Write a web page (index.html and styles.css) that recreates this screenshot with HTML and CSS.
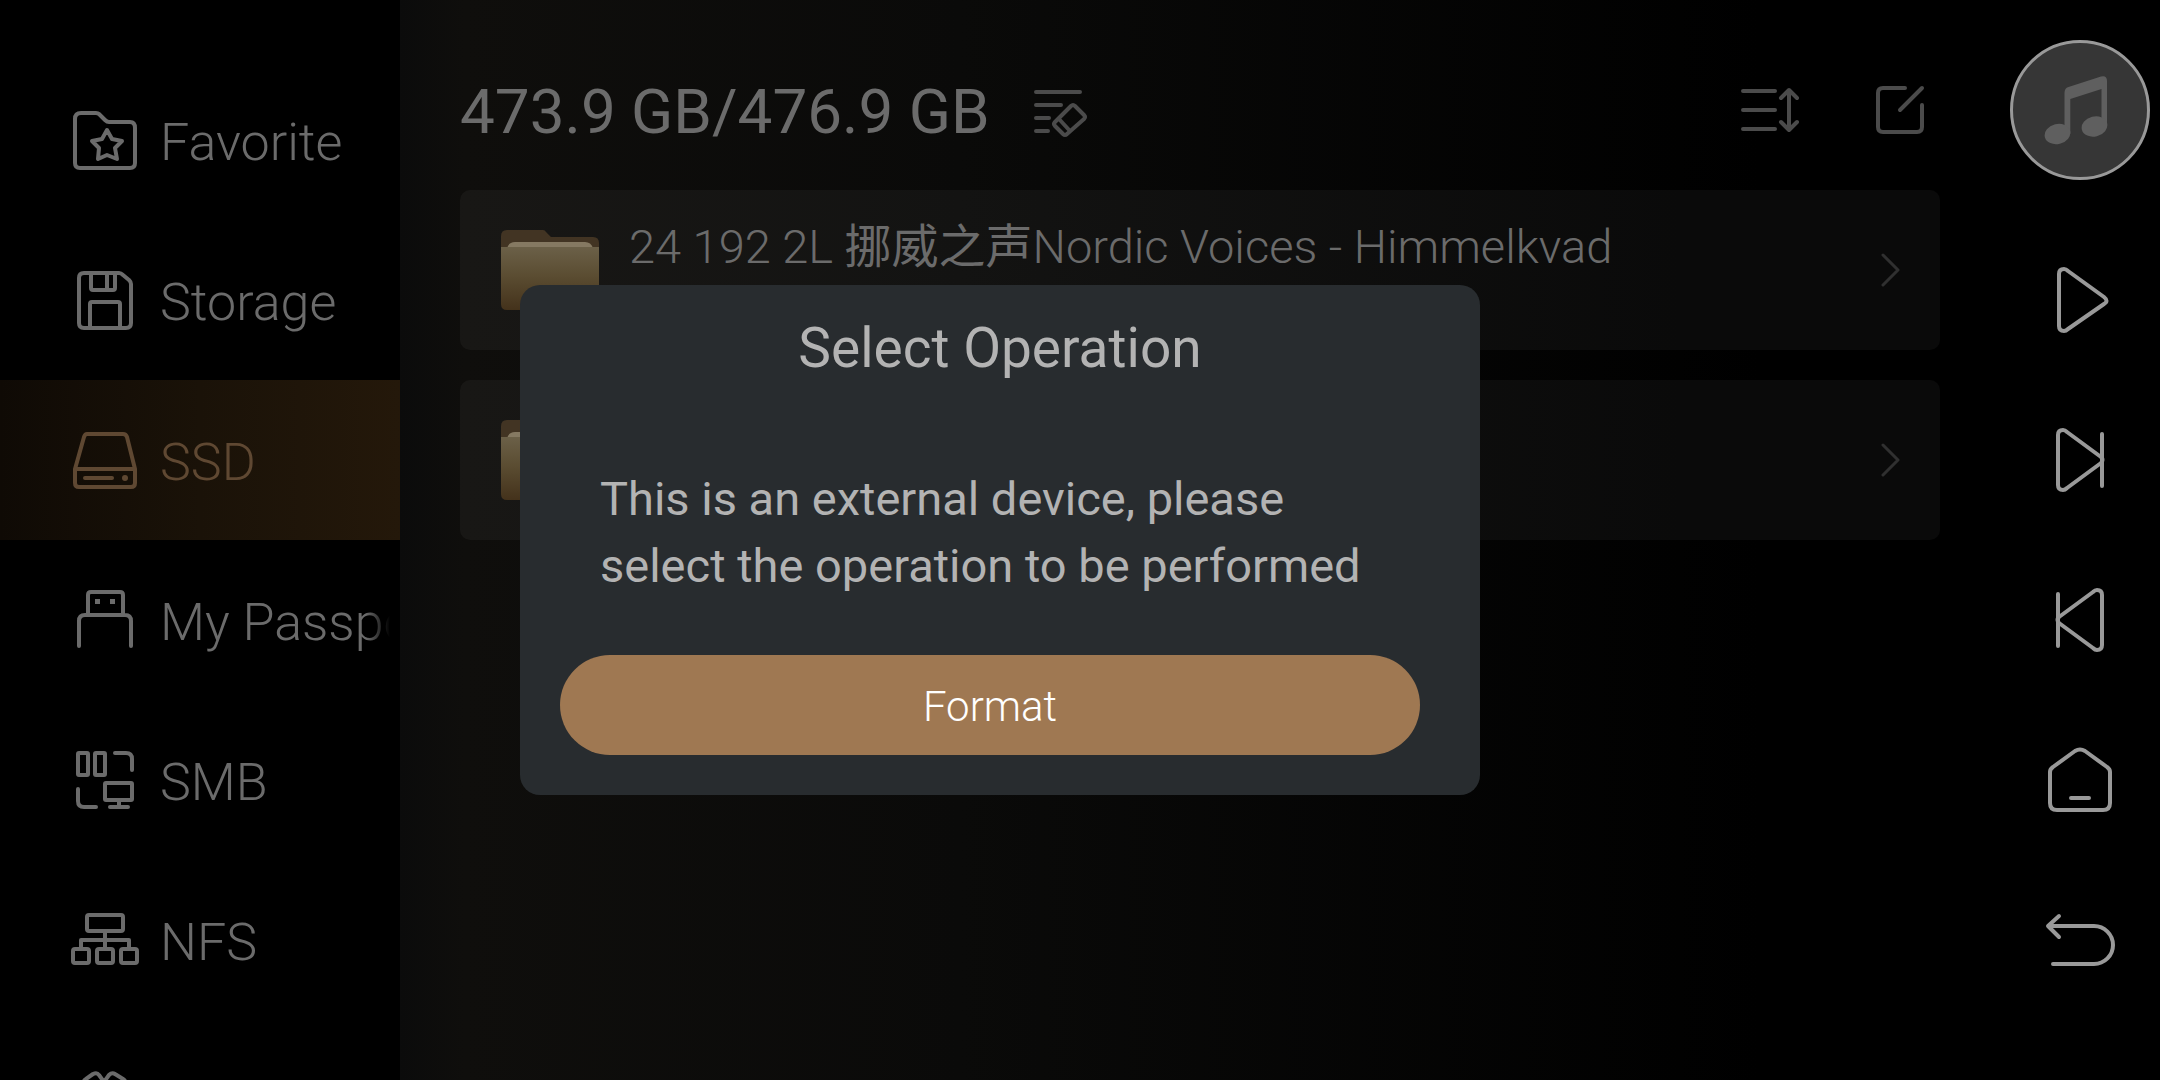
FILE: index.html
```
<!DOCTYPE html>
<html lang="en">
<head>
    <meta charset="UTF-8">
    <meta name="viewport" content="width=device-width, initial-scale=1.0">
    <title>Files - SSD</title>
    <link rel="stylesheet" href="styles.css">
</head>
<body>
    <div class="app">
        <nav class="sidebar">
            <a class="source" href="#favorite">
                <svg class="icon" viewBox="0 0 72 72">
                    <path d="M12 7h15q2 0 3 1l6 6q2 2 4 2h21q5 0 5 6v35q0 5-5 5H11q-5 0-5-5V13q0-6 6-6z"/>
                    <path d="M38 24l5 9 10 2-7 7 2 11-10-4-9 4 1-11-7-7 10-2z"/>
                </svg>
                <span class="source-name">Favorite</span>
            </a>
            <a class="source" href="#storage">
                <svg class="icon" viewBox="0 0 72 72">
                    <path d="M15 7h35q2 0 4 2l6 5q2 2 2 4v39q0 5-5 5H15q-5 0-5-5V12q0-5 5-5z"/>
                    <path d="M22 8v14q0 2 2 2h20q2 0 2-2V8M38 8v15M21 62V38q0-2 2-2h26q2 0 2 2v24"/>
                </svg>
                <span class="source-name">Storage</span>
            </a>
            <a class="source active" href="#ssd">
                <svg class="icon" viewBox="0 0 72 72">
                    <path d="M18 8h36q3 0 4 3l8 32v14q0 4-4 4H10q-4 0-4-4V43L15 11q1-3 3-3zM6 43h60"/>
                    <path d="M16 52h27"/>
                    <circle class="fill" cx="56" cy="52" r="3"/>
                </svg>
                <span class="source-name">SSD</span>
            </a>
            <a class="source" href="#passport">
                <svg class="icon" viewBox="0 0 72 72">
                    <path d="M19 29V9q0-3 3-3h29q3 0 3 3v20M10 60V35q0-6 6-6h40q6 0 6 6v25"/>
                    <path class="fill" d="M26 13h5v5h-5zM41 13h5v5h-5z"/>
                </svg>
                <span class="source-name">My Passport</span>
            </a>
            <a class="source" href="#smb">
                <svg class="icon" viewBox="0 0 72 72">
                    <rect x="9" y="7" width="10" height="22" rx="1"/>
                    <rect x="26" y="7" width="10" height="22" rx="1"/>
                    <path d="M46 7h11q6 0 6 6v11M9 43v12q0 6 6 6h12"/>
                    <rect x="36" y="37" width="27" height="17" rx="1"/>
                    <path d="M50 54v6M41 61h18"/>
                </svg>
                <span class="source-name">SMB</span>
            </a>
            <a class="source" href="#nfs">
                <svg class="icon" viewBox="0 0 72 72">
                    <rect x="18" y="9" width="36" height="16" rx="2"/>
                    <rect x="4" y="43" width="16" height="14" rx="2"/>
                    <rect x="28" y="43" width="16" height="14" rx="2"/>
                    <rect x="52" y="43" width="16" height="14" rx="2"/>
                    <path d="M36 25v18M12 43v-9h48v9"/>
                </svg>
                <span class="source-name">NFS</span>
            </a>
            <a class="source" href="#network" aria-label="Network">
                <svg class="icon" viewBox="0 0 72 72">
                    <path d="M14 40V18q0-3 3-5l7-5q4-2 6 1l5 7 5-7q3-3 6-1l8 5q3 2 3 5v22"/>
                </svg>
            </a>
        </nav>

        <main class="browser">
            <header class="toolbar">
                <h1 class="capacity">473.9 GB/476.9 GB</h1>
                <button class="tool" aria-label="Clean up">
                    <svg class="icon" viewBox="0 0 72 72">
                        <path d="M13 17h44M13 30h25M13 43h13M13 56h12"/>
                        <path d="M48 31q2-2 4 0l9 9q2 2 0 4L44 59q-2 2-4 0l-8-8q-2-2 0-4zM36 44l11 12"/>
                    </svg>
                </button>
                <button class="tool tool-right" aria-label="Sort">
                    <svg class="icon" viewBox="0 0 72 72">
                        <path d="M9 16h32M9 35h32M9 54h32M55 16v38M47 23l8-8 8 8M47 47l8 8 8-8"/>
                    </svg>
                </button>
                <button class="tool" aria-label="Edit">
                    <svg class="icon" viewBox="0 0 72 72">
                        <path d="M41 13H19q-5 0-5 5v34q0 5 5 5h34q5 0 5-5V30M58 13L36 35"/>
                    </svg>
                </button>
            </header>

            <a class="row" href="#himmelkvad">
                <svg class="folder" viewBox="0 0 98 80">
                    <defs>
                        <linearGradient id="folder-front" x1="0" y1="0" x2="0" y2="1">
                            <stop offset="0" stop-color="#6b6048"/>
                            <stop offset="0.45" stop-color="#5b4d32"/>
                            <stop offset="1" stop-color="#44321b"/>
                        </linearGradient>
                    </defs>
                    <path fill="#423423" d="M6 0h36q2 0 3 2l5 5h42q6 0 6 6v30H0V6q0-6 6-6z"/>
                    <path fill="#857962" d="M6 18q2-6 8-6h70q6 0 8 6z"/>
                    <path fill="url(#folder-front)" d="M0 17h98v57q0 6-6 6H6q-6 0-6-6z"/>
                </svg>
                <span class="row-name">24 192 2L <span class="cjk" lang="zh">挪威之声</span>Nordic Voices - Himmelkvad</span>
                <svg class="chevron" viewBox="0 0 24 40"><path d="M7 5l15 15L7 35"/></svg>
            </a>
            <a class="row" href="#folder" aria-label="Folder">
                <svg class="folder" viewBox="0 0 98 80">
                    <path fill="#423423" d="M6 0h36q2 0 3 2l5 5h42q6 0 6 6v30H0V6q0-6 6-6z"/>
                    <path fill="#857962" d="M6 18q2-6 8-6h70q6 0 8 6z"/>
                    <path fill="url(#folder-front)" d="M0 17h98v57q0 6-6 6H6q-6 0-6-6z"/>
                </svg>
                <svg class="chevron" viewBox="0 0 24 40"><path d="M7 5l15 15L7 35"/></svg>
            </a>
        </main>

        <aside class="controls">
            <button class="cover" aria-label="Now playing">
                <svg class="note" viewBox="0 0 64 72">
                    <path d="M20.5 19q0-5 4-6L57 2.5q6-1.500 6 4.500V52h-5.500V15L26.300 25v35h-5.800z"/>
                    <ellipse cx="13.500" cy="60" rx="13" ry="10" transform="rotate(-14 13.500 60)"/>
                    <ellipse cx="50.500" cy="52.500" rx="13" ry="10" transform="rotate(-14 50.500 52.500)"/>
                </svg>
            </button>
            <button class="control" aria-label="Play">
                <svg class="icon" viewBox="0 0 72 72">
                    <path d="M15 10q0-5 5-5 2 0 4 2l36 26q5 4 0 7L24 65q-2 2-4 2-5 0-5-5z"/>
                </svg>
            </button>
            <button class="control" aria-label="Next">
                <svg class="icon" viewBox="0 0 72 72">
                    <path d="M14 11q0-5 5-5 2 0 4 2l34 25q3 3 0 6L23 64q-2 2-4 2-5 0-5-5zM58 10v52"/>
                </svg>
            </button>
            <button class="control" aria-label="Previous">
                <svg class="icon" viewBox="0 0 72 72">
                    <path d="M58 11q0-5-5-5-2 0-4 2L15 33q-3 3 0 6l34 25q2 2 4 2 5 0 5-5zM14 10v52"/>
                </svg>
            </button>
            <button class="control" aria-label="Home">
                <svg class="icon" viewBox="0 0 72 72">
                    <path d="M31 7q5-3 10 0l22 16q3 2 3 5v31q0 7-7 7H13q-7 0-7-7V28q0-3 3-5zM27 54h18"/>
                </svg>
            </button>
            <button class="control" aria-label="Back">
                <svg class="icon" viewBox="0 0 72 72">
                    <path d="M15 12L4 22l11 11M5 22h45a19 19 0 0 1 0 38H9"/>
                </svg>
            </button>
        </aside>
    </div>

    <div class="overlay">
        <div class="dialog" role="dialog" aria-labelledby="dialog-title">
            <h2 class="dialog-title" id="dialog-title">Select Operation</h2>
            <p class="dialog-text">This is an external device, please select the operation to be performed</p>
            <button class="format-btn">Format</button>
        </div>
    </div>
</body>
</html>
```
FILE: styles.css
```
* {
    box-sizing: border-box;
}
body {
    margin: 0;
    background: #000;
    color: #6b6b6b;
    font-family: Roboto, "Noto Sans CJK SC", sans-serif;
    font-weight: 300;
}
a {
    color: inherit;
    text-decoration: none;
}
button {
    padding: 0;
    border: none;
    background: none;
    color: inherit;
    font: inherit;
    cursor: pointer;
}
.app {
    display: grid;
    grid-template-columns: 400px 1fr 160px;
    height: 100vh;
    overflow: hidden;
}
.icon {
    display: block;
    flex: none;
    width: 72px;
    height: 72px;
    fill: none;
    stroke: currentColor;
    stroke-width: 4;
    stroke-linecap: round;
    stroke-linejoin: round;
}
.icon .fill {
    fill: currentColor;
    stroke: none;
}

/* sources on the left */
.sidebar {
    padding-top: 60px;
    overflow: hidden;
}
.source {
    display: flex;
    align-items: center;
    gap: 19px;
    height: 160px;
    padding: 4px 10px 0 69px;
    font-size: 52px;
}
.source-name {
    flex: 1;
    overflow: hidden;
    white-space: nowrap;
    -webkit-mask-image: linear-gradient(to right, #000 calc(100% - 24px), transparent);
    mask-image: linear-gradient(to right, #000 calc(100% - 24px), transparent);
}
.source.active {
    background: linear-gradient(to right, #0f0a05, #1a1208 50%, #24180a);
    color: #5f4832;
}

/* file list */
.browser {
    display: flex;
    flex-direction: column;
    gap: 30px;
    padding: 70px 60px 0;
    background: linear-gradient(to right, #0b0b0b, #0f0e0c 4%, #0a0a09 35%, #000 85%);
}
.toolbar {
    display: flex;
    align-items: center;
    height: 82px;
    margin-bottom: 8px;
    padding-right: 4px;
}
.capacity {
    margin: 0 33px 0 0;
    font-size: 62px;
    font-weight: 400;
}
.tool {
    color: #4b4b4b;
}
.tool-right {
    margin-left: auto;
    margin-right: 58px;
}
.row {
    display: flex;
    align-items: center;
    gap: 30px;
    height: 160px;
    padding: 0 40px 0 41px;
    border-radius: 10px;
    background: rgba(255, 255, 255, 0.04);
    font-size: 47px;
}
.folder {
    flex: none;
    width: 98px;
    height: 80px;
}
.row-name {
    margin-bottom: 56px;
}
.cjk {
    font-weight: 400;
}
.chevron {
    width: 24px;
    height: 40px;
    margin-left: auto;
    fill: none;
    stroke: #303030;
    stroke-width: 3;
    stroke-linecap: round;
    stroke-linejoin: round;
}

/* player controls on the right */
.controls {
    display: flex;
    flex-direction: column;
    align-items: center;
    padding-top: 40px;
    color: #999;
}
.cover {
    display: flex;
    align-items: center;
    justify-content: center;
    width: 140px;
    height: 140px;
    margin-bottom: 40px;
    padding-right: 8px;
    border: 3px solid #999;
    border-radius: 50%;
    background: #363636;
}
.note {
    width: 64px;
    height: 72px;
    fill: #5f5f5f;
}
.control {
    display: flex;
    align-items: center;
    justify-content: center;
    width: 100%;
    height: 160px;
}

/* dialog */
.overlay {
    position: fixed;
    inset: 0;
    display: flex;
    align-items: center;
    justify-content: center;
    padding-right: 160px;
}
.dialog {
    width: 960px;
    padding: 28px 60px 40px 40px;
    border-radius: 20px;
    background: #282c2f;
    color: #b3b3b3;
    font-weight: 400;
}
.dialog-title {
    margin: 0 0 82px 20px;
    font-size: 55px;
    font-weight: 400;
    line-height: 70px;
    text-align: center;
}
.dialog-text {
    margin: 0 40px 56px;
    font-size: 47px;
    line-height: 67px;
}
.format-btn {
    width: 100%;
    height: 100px;
    padding-top: 2px;
    border-radius: 50px;
    background: #9f7852;
    color: #fff;
    font-size: 42px;
    font-weight: 300;
}
```
